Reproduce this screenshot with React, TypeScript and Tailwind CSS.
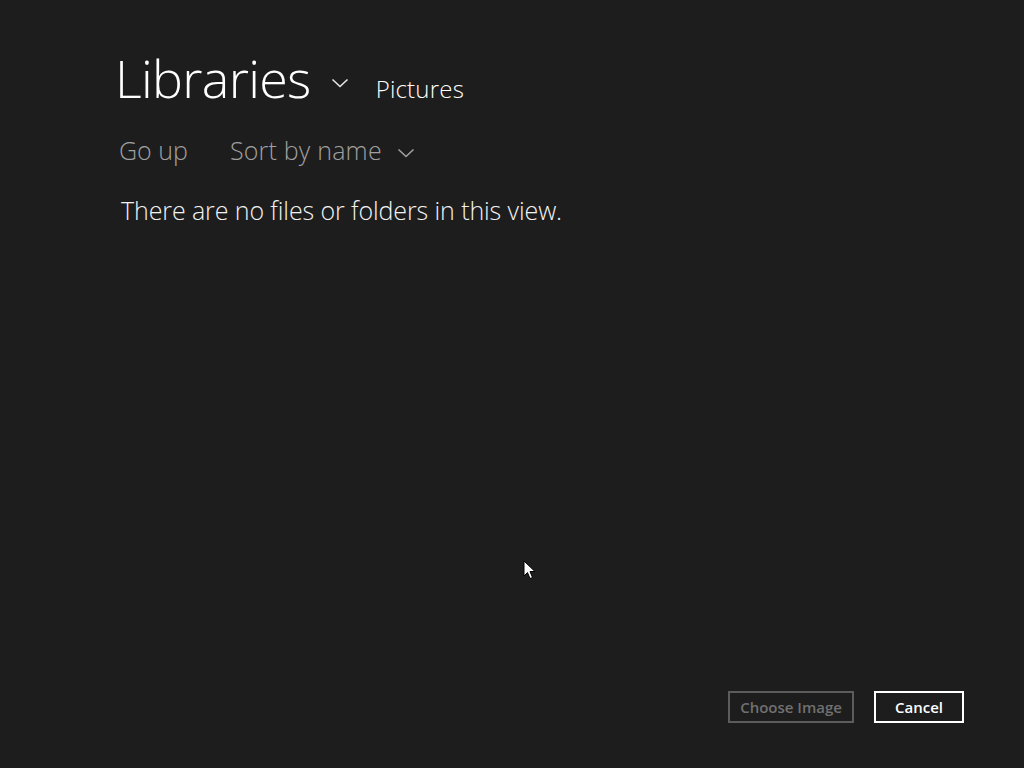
export default function App() {
  return (
    <div
      className="relative w-[1024px] h-[768px] bg-[#1d1d1d] text-white overflow-hidden flex flex-col"
      style={{ fontFamily: '"Open Sans", "Noto Sans", sans-serif' }}
    >
      {/* Header */}
      <div className="flex items-baseline pl-[115px] pt-[48px]">
        <h1 className="font-light text-[52px] leading-[60px] tracking-[-0.7px]">Libraries</h1>
        <svg className="ml-[20px] self-center mt-[10px]" width="18" height="12" viewBox="0 0 18 12">
          <path d="M1.5 2.5 L9 9.5 L16.5 2.5" fill="none" stroke="#e6e6e6" strokeWidth="1.6" />
        </svg>
        <span className="ml-[27px] font-light text-[24px] tracking-[0.2px]">Pictures</span>
      </div>

      {/* Toolbar */}
      <div className="flex items-center pl-[119px] mt-[24px] text-[25px] font-light text-[#a0a0a0]">
        <span>Go up</span>
        <span className="ml-[42px] tracking-[0.2px]">Sort by name</span>
        <svg className="ml-[15px] mt-[4px]" width="18" height="12" viewBox="0 0 18 12">
          <path d="M1.5 2.5 L9 9.5 L16.5 2.5" fill="none" stroke="#a0a0a0" strokeWidth="1.6" />
        </svg>
      </div>

      {/* Empty message */}
      <p className="pl-[121px] mt-[22px] text-[25px] font-light text-[#f2f2f2] tracking-[-0.1px]">
        There are no files or folders in this view.
      </p>

      {/* Footer buttons */}
      <div className="mt-auto flex justify-end gap-[20px] pr-[60px] pb-[45px]">
        <button className="w-[126px] h-[32px] border-2 border-[#5c5c5c] text-[#707070] text-[15px] font-semibold">
          Choose Image
        </button>
        <button className="w-[90px] h-[32px] border-2 border-white text-white text-[15px] font-semibold">
          Cancel
        </button>
      </div>

      {/* Mouse cursor */}
      <svg className="absolute left-[523px] top-[560px]" width="14" height="20" viewBox="0 0 14 20">
        <path d="M1 1 L1 16 L4.5 12.5 L7 18.5 L9.5 17.5 L7 11.5 L12 11.5 Z" fill="white" stroke="black" strokeWidth="1" />
      </svg>
    </div>
  );
}
